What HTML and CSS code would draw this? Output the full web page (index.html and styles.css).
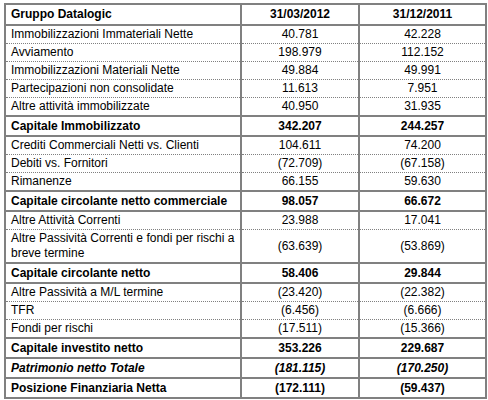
FILE: index.html
```html
<!DOCTYPE html>
<html>
<head lang="it">
    <meta charset="UTF-8">
    <title>Gruppo Datalogic</title>
    <link rel="stylesheet" href="styles.css">
</head>
<body>
<div class="wrap">
<table class="bs">
    <colgroup>
        <col class="col-label">
        <col class="col-num">
        <col class="col-num2">
    </colgroup>
    <tr class="head">
        <th class="label">Gruppo Datalogic</th>
        <th>31/03/2012</th>
        <th>31/12/2011</th>
    </tr>
    <tr><td class="label">Immobilizzazioni Immateriali Nette</td><td>40.781</td><td>42.228</td></tr>
    <tr><td class="label">Avviamento</td><td>198.979</td><td>112.152</td></tr>
    <tr><td class="label">Immobilizzazioni Materiali Nette</td><td>49.884</td><td>49.991</td></tr>
    <tr><td class="label">Partecipazioni non consolidate</td><td>11.613</td><td>7.951</td></tr>
    <tr><td class="label">Altre attività immobilizzate</td><td>40.950</td><td>31.935</td></tr>
    <tr class="total"><td class="label">Capitale Immobilizzato</td><td>342.207</td><td>244.257</td></tr>
    <tr><td class="label">Crediti Commerciali Netti vs. Clienti</td><td>104.611</td><td>74.200</td></tr>
    <tr><td class="label">Debiti vs. Fornitori</td><td>(72.709)</td><td>(67.158)</td></tr>
    <tr><td class="label">Rimanenze</td><td>66.155</td><td>59.630</td></tr>
    <tr class="total"><td class="label">Capitale circolante netto commerciale</td><td>98.057</td><td>66.672</td></tr>
    <tr><td class="label">Altre Attività Correnti</td><td>23.988</td><td>17.041</td></tr>
    <tr><td class="label">Altre Passività Correnti e fondi per rischi a breve termine</td><td>(63.639)</td><td>(53.869)</td></tr>
    <tr class="total"><td class="label">Capitale circolante netto</td><td>58.406</td><td>29.844</td></tr>
    <tr><td class="label">Altre Passività a M/L termine</td><td>(23.420)</td><td>(22.382)</td></tr>
    <tr><td class="label">TFR</td><td>(6.456)</td><td>(6.666)</td></tr>
    <tr><td class="label">Fondi per rischi</td><td>(17.511)</td><td>(15.366)</td></tr>
    <tr class="total"><td class="label">Capitale investito netto</td><td>353.226</td><td>229.687</td></tr>
    <tr class="total italic"><td class="label">Patrimonio netto Totale</td><td>(181.115)</td><td>(170.250)</td></tr>
    <tr class="total"><td class="label">Posizione Finanziaria Netta</td><td>(172.111)</td><td>(59.437)</td></tr>
</table>
</div>
</body>
</html>
```

FILE: styles.css
```css
body {
    margin: 0px;
    background: #ffffff;
    font-family: "Liberation Sans", Arial, sans-serif;
    font-size: 12px;
    color: #000000;
}
.wrap {
    padding: 3px 0px 0px 4px;
}
.bs {
    border-collapse: collapse;
    width: 481px;
    border: 2px solid #808080;
    table-layout: fixed;
}
.col-label {
    width: 236px;
}
.col-num {
    width: 118px;
}
.col-num2 {
    width: 127px;
}
.bs th,
.bs td {
    border-left: 2px solid #808080;
    border-right: 2px solid #808080;
    border-bottom: 1px dotted #808080;
    padding: 1px 4px;
    line-height: 15px;
    text-align: center;
    vertical-align: middle;
}
.bs .label {
    text-align: left;
    padding-left: 5px;
    padding-right: 2px;
}
.bs th {
    font-weight: bold;
    padding-top: 2px;
    padding-bottom: 2px;
    border-bottom: 2px solid #808080;
}
.bs .total td {
    font-weight: bold;
    border-top: 2px solid #808080;
    border-bottom: 2px solid #808080;
    padding-top: 2px;
    padding-bottom: 1px;
}
.bs .italic td {
    font-style: italic;
}
```
